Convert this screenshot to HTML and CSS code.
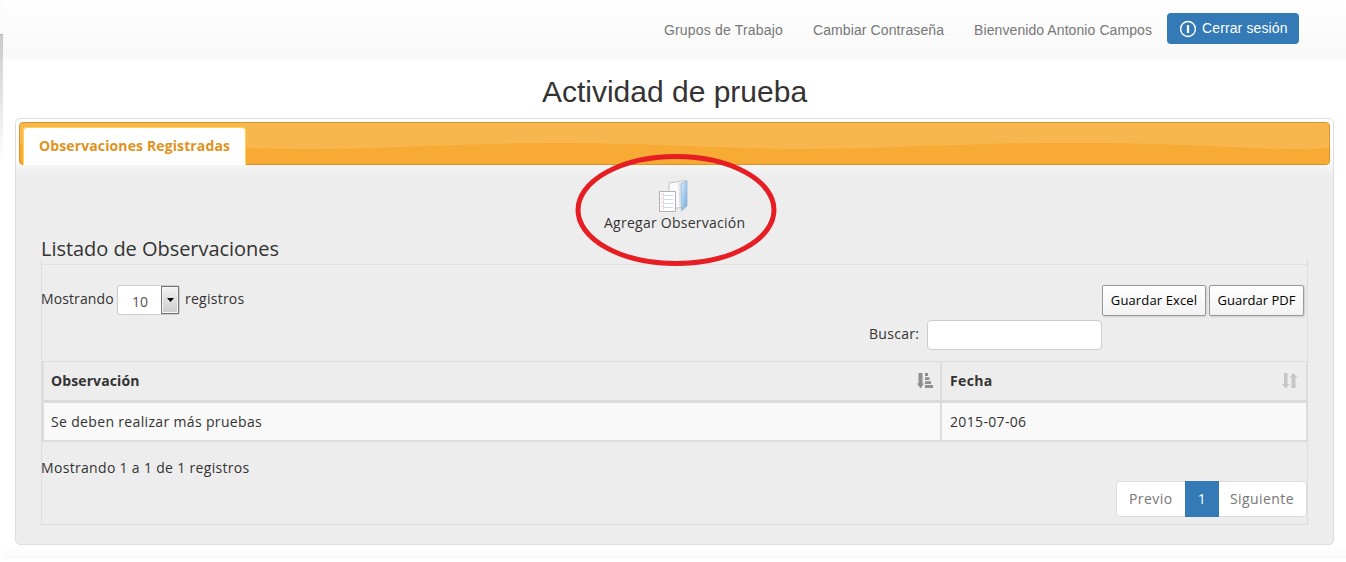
FILE: index.html
```html
<!DOCTYPE html>
<html lang="es">
<head>
<meta charset="utf-8">
<title>Actividad de prueba</title>
<link rel="stylesheet" href="styles.css">
</head>
<body>
<div class="edge"></div>
<div class="page">
  <nav class="navbar">
    <a class="nav-link nav-groups">Grupos de Trabajo</a>
    <a class="nav-link nav-pass">Cambiar Contraseña</a>
    <a class="nav-link nav-user">Bienvenido Antonio Campos</a>
    <a class="logout"><svg width="18" height="18" viewBox="0 0 18 18"><circle cx="9" cy="9" r="7.4" fill="none" stroke="#fff" stroke-width="1.5"/><path d="M9 5v8" stroke="#fff" stroke-width="2.2"/></svg><span>Cerrar sesión</span></a>
  </nav>
  <h1 class="title"><span>Actividad de prueba</span></h1>
  <main class="panel">
    <div class="tabs">
      <svg class="wave" width="1309" height="41" viewBox="0 0 1309 41">
        <path fill="#f8b64f" d="M0 0H1310V25C1280 27 1250 26 1210 24C1140 20 1080 20 1040 20C940 20 870 26 790 26C700 26 640 20 540 20C440 20 370 26 290 26C200 26 140 20 40 20L0 21Z"/>
      </svg>
      <div class="tab"><span class="t-tab">Observaciones Registradas</span></div>
    </div>
    <section class="content">
      <div class="add">
        <svg width="32" height="34" viewBox="0 0 32 34">
          <defs><linearGradient id="blue" x1="0" y1="0" x2="1" y2="1"><stop offset="0" stop-color="#dcefff"/><stop offset="1" stop-color="#6fa6d6"/></linearGradient></defs>
          <path d="M11 4L27 1.500V28L11 30Z" fill="#fafafa" stroke="#c0c3c6"/>
          <path d="M20 4L27 2V30L21 27Z" fill="#e4e8ec"/>
          <path d="M23 5L29 1.500V27L23.500 32Z" fill="url(#blue)" stroke="#9ab8d2" stroke-width=".8"/>
          <path d="M1.500 12.500H17.500V32.500H1.500Z" fill="#fff" stroke="#b2b2b2"/>
          <path d="M5.500 16.500H15M5.500 20.500H15M5.500 24.500H15M5.500 28.500H15" stroke="#c7dcf3"/>
          <path d="M5.500 14V31" stroke="#f7cfd2"/>
          <path d="M3.500 15V31" stroke="#e0b0b0" stroke-dasharray="1 3"/>
        </svg>
        <span class="t-add">Agregar Observación</span>
        <svg class="ring" width="202" height="114" viewBox="0 0 202 114"><ellipse cx="101" cy="57" rx="98" ry="53.500" fill="none" stroke="#e71d24" stroke-width="5"/></svg>
      </div>
      <h2 class="legend"><span class="t-legend">Listado de Observaciones</span></h2>
      <div class="grid">
        <div class="sides"></div>
        <div class="toolbar">
          <div class="length">
            <span class="t-show">Mostrando</span>
            <div class="select"><span class="t-ten">10</span><i><svg width="7" height="4" viewBox="0 0 7 4"><path d="M0 0H7L3.500 4Z"/></svg></i></div>
            <span class="t-reg">registros</span>
          </div>
          <div class="exports">
            <button class="btn excel"><span class="t-excel">Guardar Excel</span></button>
            <button class="btn pdf"><span class="t-pdf">Guardar PDF</span></button>
          </div>
        </div>
        <label class="search"><span class="t-search">Buscar:</span><input type="text"></label>
        <table class="data">
          <thead><tr>
            <th class="c1"><div class="head"><span class="t-obs">Observación</span>
              <svg width="16" height="16" viewBox="0 0 16 16" fill="#8f8f8f"><path d="M1.500 0H5.500V10.500H7L3.500 15.500L0 10.500H1.500Z"/><path d="M8 0H11V3H8ZM8 4.200H12.500V7H8ZM8 8.200H14V11H8ZM8 12H16V15H8Z"/></svg></div></th>
            <th class="c2"><div class="head"><span class="t-fecha">Fecha</span>
              <svg width="16" height="16" viewBox="0 0 16 16" fill="#c7c7c7"><path d="M2 0H5.500V11H7.500L3.800 15.500L0 11H2ZM9.500 15V4.500H7.500L11.500 0L15.500 4.500H13.500V15Z"/></svg></div></th>
          </tr></thead>
          <tbody><tr><td><span class="t-row">Se deben realizar más pruebas</span></td><td><span class="t-date">2015-07-06</span></td></tr></tbody>
        </table>
        <p class="info"><span class="t-info">Mostrando 1 a 1 de 1 registros</span></p>
        <div class="pager"><a class="prev"><span class="t-prev">Previo</span></a><a class="current">1</a><a class="next"><span class="t-next">Siguiente</span></a></div>
      </div>
    </section>
  </main>
  <div class="foot"></div>
</div>
</body>
</html>
```
FILE: styles.css
```css
* { box-sizing: border-box; }
body { margin: 0; width: 1346px; height: 562px; overflow: hidden; display: flex; background: #fff; color: #333; font: 14px/20px "Open Sans", "Noto Sans", sans-serif; }
span { white-space: nowrap; }
svg { display: block; flex: none; }
.edge { width: 3px; height: 128px; margin-top: 34px; border-top: 1px solid #b5b5b5; background: linear-gradient(#cbcbcb, #fff); }
.page { width: 1343px; }
.navbar { height: 57px; display: flex; align-items: flex-start; justify-content: flex-end; padding: 13px 47px 0 0; background: linear-gradient(#fff, #f8f8f8); box-shadow: 0 1px 4px rgba(0,0,0,.06); font-family: "Liberation Sans", Arial, sans-serif; }
.nav-link { color: #777; line-height: 34px; margin-right: 30px; white-space: nowrap; }
.nav-groups { letter-spacing: .18px; }
.nav-pass { letter-spacing: .11px; }
.nav-user { margin-right: 15px; letter-spacing: .08px; }
.logout { width: 132px; height: 31px; display: flex; align-items: center; gap: 5px; padding-left: 12px; background: #337ab7; border-radius: 4px; color: #fff; letter-spacing: .12px; }
.logout span { padding-bottom: 2px; }
.title { margin: 0; height: 61px; padding-top: 17px; text-align: center; font: 400 30px/36px "Liberation Sans", Arial, sans-serif; }
.panel { width: 1319px; height: 427px; margin-left: 12px; padding: 3px; border: 1px solid #ddd; border-radius: 5px; background: linear-gradient(#fff 0, #fafafa 40px, #ededed 58px); }
.tabs { position: relative; height: 43px; width: 1311px; border: 1px solid #d9922c; border-radius: 4px; background: #f7ab34; padding: 4px 0 0 3px; }
.wave { position: absolute; left: 0; top: 0; border-radius: 3px; }
.tab { position: relative; width: 223px; height: 38px; background: #fff; border: 1px solid #fbd850; border-bottom: 0; border-radius: 4px 4px 0 0; padding: 8px 0 0 15px; color: #e0921c; font-weight: 700; letter-spacing: .12px; }
.content { padding: 14px 22px 0; }
.add { position: relative; width: 142px; height: 54px; margin-left: 563px; }
.add > svg:first-child { margin-left: 54px; }
.add span { display: block; line-height: 20px; letter-spacing: .25px; }
.ring { position: absolute; left: -29px; top: -26px; z-index: 2; }
.legend { margin: 0; height: 31px; padding-top: 2px; font-size: 20px; font-weight: 400; line-height: 27px; letter-spacing: -.04px; }
.grid { position: relative; width: 1267px; height: 261px; border: 1px solid #ddd; border-top-color: #e2e2e2; }
.sides { position: absolute; left: -1px; right: -1px; top: -6px; height: 6px; border: 1px solid #ddd; border-width: 0 1px; }
.toolbar { display: flex; justify-content: space-between; height: 55px; padding: 20px 3px 0 0; }
.length { display: flex; align-items: flex-start; }
.length > span { line-height: 27px; }
.t-show { width: 76px; margin-left: -1px; letter-spacing: .1px; }
.t-reg { letter-spacing: .25px; }
.select { display: flex; width: 63px; height: 30px; margin-right: 5px; border: 1px solid #ccc; border-radius: 3px; background: #fff; color: #555; }
.select span { width: 44px; padding-left: 14px; line-height: 31px; }
.select i { width: 18px; height: 28px; display: flex; align-items: center; justify-content: center; border: 1px solid #777; background: linear-gradient(#f3f3f3, #ccc); box-shadow: inset 0 0 0 1px #f4f4f4; }
.exports { display: flex; gap: 3px; }
.btn { height: 31px; padding: 0 0 2px; border: 1px solid #999; border-radius: 2px; background: linear-gradient(#fff, #f2f2f2); box-shadow: 1px 1px 2px #ccc; font: 13px/20px "Open Sans", "Noto Sans", sans-serif; color: #000; }
.excel { width: 104px; letter-spacing: .13px; }
.pdf { width: 95px; }
.search { display: flex; margin-left: 827px; height: 41px; line-height: 28px; letter-spacing: .3px; }
.search span { width: 58px; }
.search input { width: 175px; height: 30px; padding: 0; border: 1px solid #ccc; border-radius: 4px; background: #fff; }
.data { width: 1265px; height: 81px; table-layout: fixed; border-collapse: separate; border-spacing: 0; border: 1px solid #ddd; border-left-width: 2px; border-bottom-width: 2px; }
.data th, .data td { padding: 0 8px; text-align: left; }
.data th:first-child, .data td:first-child { padding-left: 7px; }
.data th { height: 41px; border-bottom: 3px solid #dbdbdb; }
.data td { height: 37px; background: #f9f9f9; letter-spacing: .34px; }
.data .c1 { width: 898px; letter-spacing: .1px; }
.data .c2 { letter-spacing: .35px; }
.data th:first-child, .data td:first-child { border-right: 2px solid #ddd; }
.head { display: flex; justify-content: space-between; align-items: center; }
.c1 .head { margin-right: -1px; }
.info { margin: 0 0 0 -1px; height: 39px; padding-top: 16px; letter-spacing: .32px; }
.pager { display: flex; width: 191px; height: 36px; margin-left: 1074px; border: 1px solid #ddd; border-radius: 4px; background: #fff; color: #777; line-height: 34px; letter-spacing: .42px; }
.prev { width: 68px; padding-left: 12px; }
.current { width: 34px; margin: -1px 0; line-height: 36px; text-align: center; background: #337ab7; color: #fff; }
.next { padding-left: 11px; }
.foot { height: 14px; background: linear-gradient(#fff, #fafafa); }
```
